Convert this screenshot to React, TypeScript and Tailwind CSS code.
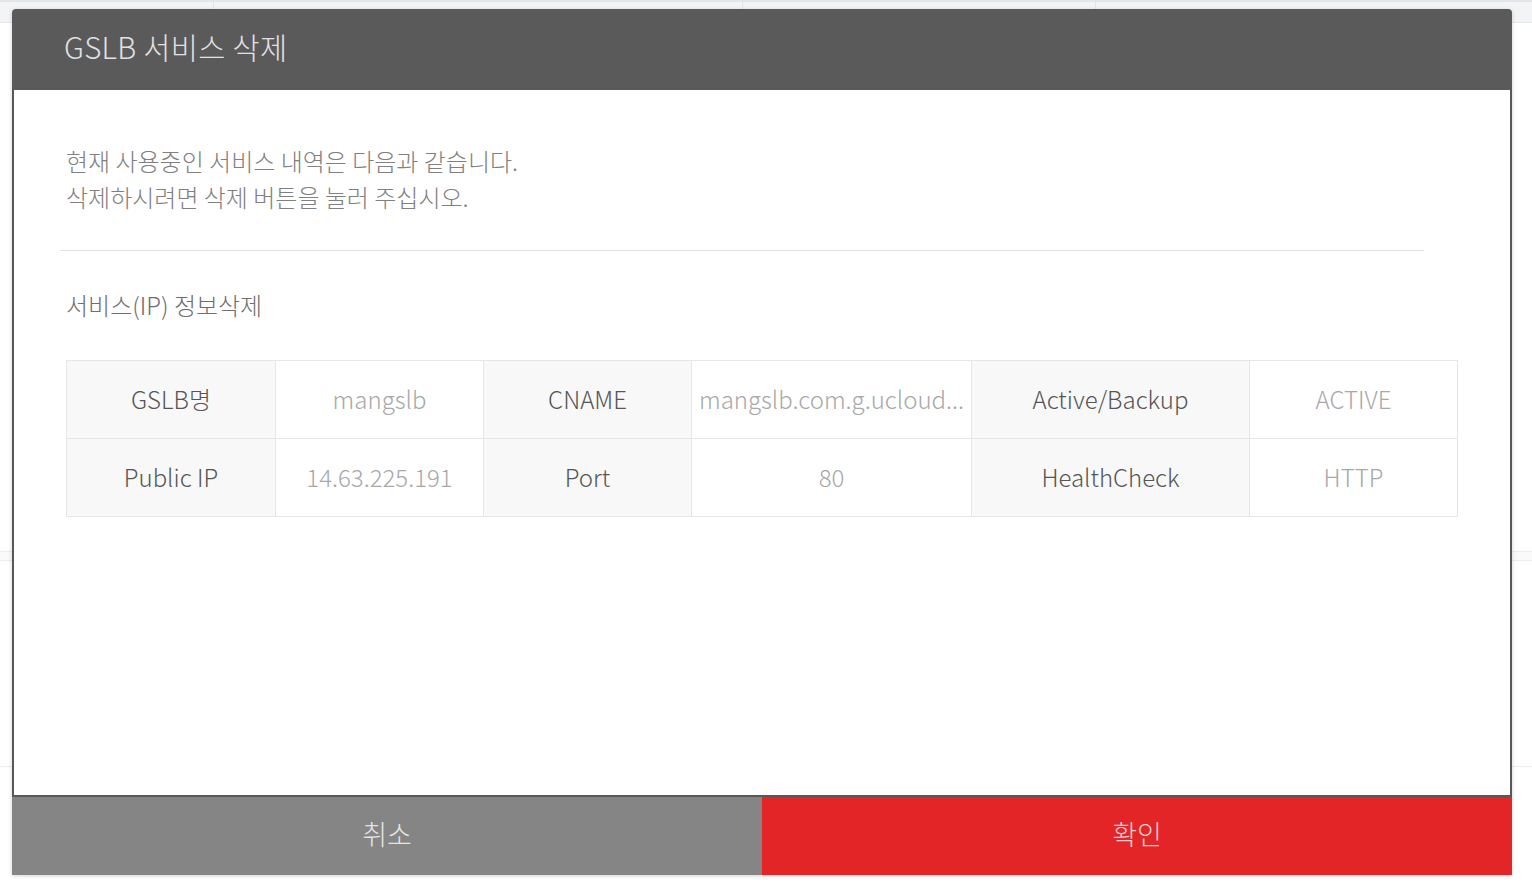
const cellFont = { fontFamily: '"Noto Sans CJK KR", "Noto Sans", sans-serif' };

function Background() {
  return (
    <div className="relative h-[884px] w-[1532px] bg-white">
      <div className="flex h-[23px] border-t-2 border-b border-t-[#e2e5ea] border-b-[#e3e5e8] bg-[#f3f4f6]">
        <div className="w-[214px] border-r border-[#e3e5e8]" />
        <div className="w-[529px] border-r border-[#e3e5e8]" />
        <div className="w-[353px] border-r border-[#e3e5e8]" />
        <div className="flex-1" />
      </div>
      <div className="mt-[528px] h-[10px] border-y border-[#ececec] bg-[#fafafa]" />
      <div className="mt-[205px] h-px bg-[#ececec]" />
    </div>
  );
}

function InfoTable() {
  const rows = [
    ['GSLB명', 'mangslb', 'CNAME', 'mangslb.com.g.ucloud...', 'Active/Backup', 'ACTIVE'],
    ['Public IP', '14.63.225.191', 'Port', '80', 'HealthCheck', 'HTTP'],
  ];
  const widths = ['w-[209px]', 'w-[208px]', 'w-[208px]', 'w-[280px]', 'w-[278px]', 'w-[208px]'];

  return (
    <table className="ml-[52px] mt-[37px] w-[1391px] table-fixed border-collapse text-[24px] font-light">
      <colgroup>
        {widths.map((w, i) => (
          <col key={i} className={w} />
        ))}
      </colgroup>
      <tbody>
        {rows.map((row, r) => (
          <tr key={r} className="h-[78px]">
            {row.map((cell, c) =>
              c % 2 === 0 ? (
                <td key={c} className="border border-[#e6e6e6] bg-[#f8f8f8] px-1 pb-[2px] text-center text-[#555]">
                  {cell}
                </td>
              ) : (
                <td key={c} className="whitespace-nowrap border border-[#e6e6e6] bg-white px-1 pb-[2px] text-center text-[#a8a8a8]">
                  {cell}
                </td>
              )
            )}
          </tr>
        ))}
      </tbody>
    </table>
  );
}

export default function App() {
  return (
    <div className="relative h-[884px] w-[1532px] overflow-hidden" style={cellFont}>
      <Background />

      {/* modal */}
      <div className="absolute left-[12px] top-[9px] w-[1500px] rounded-t-[4px] shadow-[0_1px_4px_rgba(0,0,0,0.18)]">
        <div className="flex h-[81px] items-center rounded-t-[4px] bg-[#5a5a5a] pb-[6px] pl-[52px]">
          <h2 className="text-[29.5px] font-light tracking-[0.3px] text-[#e2e2e2]">GSLB 서비스 삭제</h2>
        </div>

        <div className="h-[707px] border-x-2 border-b-2 border-[#585858] bg-white pt-[53px] font-light">
          <div className="pl-[52px] text-[24px] leading-[36px] text-[#808080]">
            <p>현재 사용중인 서비스 내역은 다음과 같습니다.</p>
            <p>삭제하시려면 삭제 버튼을 눌러 주십시오.</p>
          </div>

          <div className="ml-[46px] mt-[35px] h-px w-[1364px] bg-[#e2e2e2]" />

          <p className="mt-[36px] pl-[52px] text-[24px] leading-[36px] text-[#6e6e6e]">서비스(IP) 정보삭제</p>

          <InfoTable />
        </div>

        <div className="flex h-[78px] text-[27px] font-light">
          <button className="flex flex-1 items-center justify-center bg-[#858585] pb-[4px] text-[#e4e4e4]">취소</button>
          <button className="flex flex-1 items-center justify-center bg-[#e32528] pb-[4px] text-[#f6d3d3]">확인</button>
        </div>
      </div>
    </div>
  );
}
